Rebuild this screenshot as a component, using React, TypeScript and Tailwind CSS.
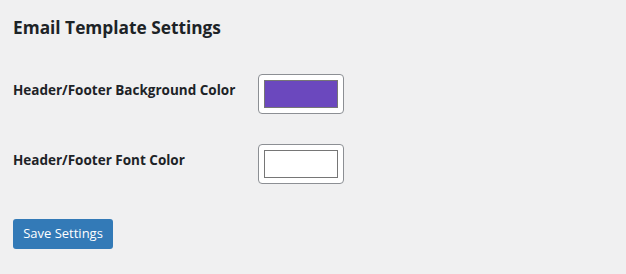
import React from 'react';

const ColorField = ({ color }: { color: string }) => (
  <div className="w-[86px] h-[40px] p-[5px] bg-white border border-[#8c8f94] rounded-[4px]">
    <div className="w-full h-full border border-[#767676]" style={{ backgroundColor: color }} />
  </div>
);

const SettingRow = ({ label, color }: { label: string; color: string }) => (
  <div className="flex items-start">
    <div className="w-[245px] pt-[6px] text-[13.5px] font-bold leading-[20px] text-[#1d2327]">{label}</div>
    <ColorField color={color} />
  </div>
);

export default function App() {
  return (
    <div
      className="min-h-[274px] w-full bg-[#f0f0f1] pl-[13px] pt-[16px]"
      style={{ fontFamily: '"Open Sans", "Noto Sans", sans-serif' }}
    >
      <h2 className="text-[17.3px] font-bold leading-[24px] text-[#1d2327]">Email Template Settings</h2>
      <div className="mt-[34px] flex flex-col gap-[30px]">
        <SettingRow label="Header/Footer Background Color" color="#6b48be" />
        <SettingRow label="Header/Footer Font Color" color="#ffffff" />
      </div>
      <button className="mt-[35px] h-[30px] w-[100px] rounded-[3px] bg-[#337ab7] text-[13px] text-white">
        Save Settings
      </button>
    </div>
  );
}
